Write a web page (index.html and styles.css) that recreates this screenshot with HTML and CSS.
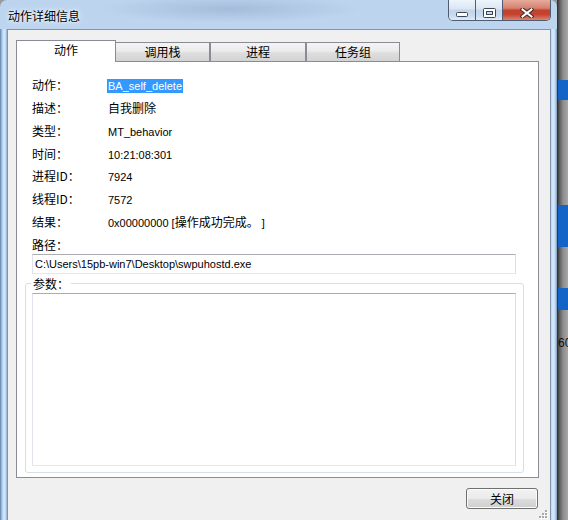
FILE: index.html
```html
<!DOCTYPE html>
<html lang="zh">
<head>
<meta charset="utf-8">
<title>动作详细信息</title>
<link rel="stylesheet" href="styles.css">
</head>
<body>
<div class="screen">
  <div class="window">
    <div class="titlebar">
      <div class="title">动作详细信息</div>
      <div class="caption">
        <div class="cbtn min"><svg class="g-min" width="12" height="5" viewBox="0 0 12 5"><rect x="0.5" y="0.5" width="11" height="4" rx="1" fill="#fff" stroke="#3b4758"/></svg></div>
        <div class="cbtn max"><svg class="g-max" width="13" height="10" viewBox="0 0 13 10"><rect x="0.5" y="0.5" width="12" height="9" rx="1" fill="#fff" stroke="#3b4758"/><rect x="3.5" y="3.5" width="6" height="3" fill="#c9d8ea" stroke="#3b4758"/></svg></div>
        <div class="cbtn close"><svg class="g-close" width="14" height="10" viewBox="0 0 14 10"><path d="M2.5 1.5 L11.5 8.5 M11.5 1.5 L2.5 8.5" stroke="#3a2b2b" stroke-width="4" stroke-linecap="square" fill="none"/><path d="M2.5 1.5 L11.5 8.5 M11.5 1.5 L2.5 8.5" stroke="#ffffff" stroke-width="2" stroke-linecap="square" fill="none"/></svg></div>
      </div>
    </div>
    <div class="body">
      <div class="frame-l"></div>
      <div class="client">
        <div class="tabctl">
          <div class="tabs">
            <div class="tab sel">动作</div>
            <div class="tab t2">调用栈</div>
            <div class="tab t3">进程</div>
            <div class="tab t4">任务组</div>
          </div>
          <div class="panel">
            <div class="fields">
              <div class="lbl">动作：</div><div class="val"><span class="lat hl">BA_self_delete</span></div>
              <div class="lbl">描述：</div><div class="val">自我删除</div>
              <div class="lbl">类型：</div><div class="val"><span class="lat">MT_behavior</span></div>
              <div class="lbl">时间：</div><div class="val"><span class="lat">10:21:08:301</span></div>
              <div class="lbl">进程ID：</div><div class="val"><span class="lat">7924</span></div>
              <div class="lbl">线程ID：</div><div class="val"><span class="lat">7572</span></div>
              <div class="lbl">结果：</div><div class="val"><span class="lat">0x00000000 [</span>操作成功完成。<span class="lat"> ]</span></div>
              <div class="lbl">路径：</div><div class="val"></div>
            </div>
            <div class="textbox lat">C:\Users\15pb-win7\Desktop\swpuhostd.exe</div>
            <fieldset class="group">
              <legend>参数：</legend>
              <div class="textarea"></div>
            </fieldset>
          </div>
        </div>
        <div class="footer"><button class="btn">关闭</button></div>
        <div class="grip"><svg width="9" height="9" viewBox="0 0 9 9"><g fill="#ffffff"><rect x="7" y="1" width="2" height="2"/><rect x="4" y="4" width="2" height="2"/><rect x="7" y="4" width="2" height="2"/><rect x="1" y="7" width="2" height="2"/><rect x="4" y="7" width="2" height="2"/><rect x="7" y="7" width="2" height="2"/></g><g fill="#a8a8a8"><rect x="6" y="0" width="2" height="2"/><rect x="3" y="3" width="2" height="2"/><rect x="6" y="3" width="2" height="2"/><rect x="0" y="6" width="2" height="2"/><rect x="3" y="6" width="2" height="2"/><rect x="6" y="6" width="2" height="2"/></g></svg></div>
      </div>
      <div class="frame-r"></div>
    </div>
  </div>
  <div class="behind">
    <div class="bar b1"></div>
    <div class="bar b2"></div>
    <div class="bar b3"></div>
    <div class="num">60</div>
  </div>
</div>
</body>
</html>
```
FILE: styles.css
```css
html, body {
  margin: 0;
  padding: 0;
}
body {
  width: 568px;
  height: 520px;
  overflow: hidden;
  background: #9a9a9a;
  font-family: "Noto Sans CJK SC", "Liberation Sans", sans-serif;
  font-size: 12px;
  color: #000;
}
.screen {
  display: flex;
  height: 520px;
}
.window {
  width: 557px;
  flex: none;
  display: flex;
  flex-direction: column;
  border-radius: 7px 7px 0 0;
  overflow: hidden;
  background:
    radial-gradient(ellipse 130px 14px at 230px 9px, rgba(120, 145, 180, 0.35), rgba(120, 145, 180, 0)),
    linear-gradient(#bcd4ee, #cfe2f6);
}
.titlebar {
  height: 29px;
  flex: none;
  display: flex;
  justify-content: space-between;
  align-items: flex-start;
}
.title {
  padding-left: 8px;
  margin-top: 7px;
  line-height: 17px;
  text-shadow: 0 0 6px rgba(255, 255, 255, 0.95), 0 0 3px rgba(255, 255, 255, 0.9);
}
.caption {
  display: flex;
  margin-right: 6px;
  border: 1px solid #4f5d72;
  border-top: none;
  border-radius: 0 0 5px 5px;
  overflow: hidden;
}
.cbtn {
  height: 20px;
  display: flex;
  justify-content: center;
  align-items: center;
}
.min, .max {
  width: 26px;
  border-right: 1px solid #4f5d72;
  background: linear-gradient(#eef4fb 0%, #dbe6f3 45%, #c3d4e9 50%, #c9dbef 80%, #e0ecf8 100%);
}
.close {
  width: 47px;
  background: linear-gradient(#e7ab9c 0%, #d6826f 40%, #c5412f 52%, #c4432f 72%, #da8571 100%);
}
.g-min { margin-top: 8px; }
.g-max { margin-top: 5px; }
.g-close { margin-top: 5px; }

.body {
  flex: 1;
  display: flex;
  min-height: 0;
}
.frame-l {
  width: 7px;
  flex: none;
  background: linear-gradient(90deg, #5f7fa8 0, #a9c9ee 2px, #d9ebfd 4px, #b9d4f1 6px, #8ea4c0 7px);
}
.frame-r {
  width: 6px;
  flex: none;
  background: linear-gradient(90deg, #b9d6f5 0, #d9ebfd 2px, #c0daf5 4px, #7d97b6 6px);
}
.client {
  flex: 1;
  background: #f0f0f0;
  border: 1px solid #8193ad;
  border-bottom: none;
  padding: 10px 11px 0 8px;
  display: flex;
  flex-direction: column;
}

.tabs {
  display: flex;
  align-items: flex-end;
  height: 21px;
}
.tab {
  box-sizing: border-box;
  height: 19px;
  border: 1px solid #898c95;
  border-bottom: none;
  background: linear-gradient(#f4f4f4, #ebebeb 45%, #dedede 55%, #d3d3d3);
  text-align: center;
  line-height: 18px;
}
.tab.sel {
  width: 100px;
  height: 22px;
  margin-bottom: -1px;
  background: #fff;
  position: relative;
  z-index: 1;
  line-height: 18px;
}
.t2 { width: 95px; margin-left: -1px; }
.t3 { width: 96px; }
.t4 { width: 94px; }

.panel {
  box-sizing: border-box;
  height: 417px;
  border: 1px solid #898c95;
  background: #fff;
  padding: 12px 22px 0 15px;
}
.fields {
  display: grid;
  grid-template-columns: 76px 1fr;
  grid-template-rows: repeat(7, 22.85px) 20px;
  line-height: 22.85px;
}
.lat {
  font-family: "Liberation Sans", sans-serif;
  font-size: 11px;
}
.hl {
  display: inline-block;
  line-height: 14px;
  background: #3399ff;
  color: #fff;
  padding: 0 1px;
  margin-left: -1px;
}
.textbox {
  box-sizing: border-box;
  height: 20px;
  border: 1px solid;
  border-color: #abadb3 #dbdfe6 #e3e9ef #e2e3ea;
  padding-left: 2px;
  line-height: 18px;
  white-space: nowrap;
}
.group {
  margin: 3px -8px 0 -7px;
  padding: 2px 7px 6px 6px;
  border: 1px solid #d5dfe5;
  border-radius: 3px;
  min-width: 0;
}
.group legend {
  padding: 0 2px;
  margin-left: -1px;
  line-height: 14px;
  font-size: 12px;
}
.textarea {
  box-sizing: border-box;
  height: 173px;
  border: 1px solid;
  border-color: #abadb3 #dbdfe6 #e3e9ef #e2e3ea;
}

.footer {
  display: flex;
  justify-content: flex-end;
  margin-top: 10px;
  padding-right: 1px;
}
.btn {
  box-sizing: border-box;
  width: 72px;
  height: 21px;
  padding: 0;
  border: 1px solid #707070;
  border-radius: 3px;
  background: linear-gradient(#f2f2f2, #ebebeb 50%, #dddddd 50%, #cfcfcf);
  box-shadow: inset 0 0 0 1px #fbfbfb;
  font-family: "Noto Sans CJK SC", sans-serif;
  font-size: 12px;
  line-height: 19px;
  color: #000;
}
.grip {
  align-self: flex-end;
  margin: 1px -9px 0 0;
  width: 9px;
  height: 9px;
}
.grip svg { display: block; }

.behind {
  flex: 1;
  display: flex;
  flex-direction: column;
  background: linear-gradient(90deg, #2a2a2a 0, #555 2px, #8c8c8c 6px, #a8a8a8 11px);
}
.bar {
  margin-left: 1px;
  background: #1464c8;
}
.b1 { margin-top: 80px; height: 20px; }
.b2 { margin-top: 105px; height: 42px; }
.b3 { margin-top: 41px; height: 22px; }
.num {
  margin-top: 27px;
  padding-left: 1px;
  font-family: "Liberation Sans", sans-serif;
  font-size: 12px;
  line-height: 12px;
  white-space: nowrap;
  overflow: hidden;
  color: #111;
}
```
